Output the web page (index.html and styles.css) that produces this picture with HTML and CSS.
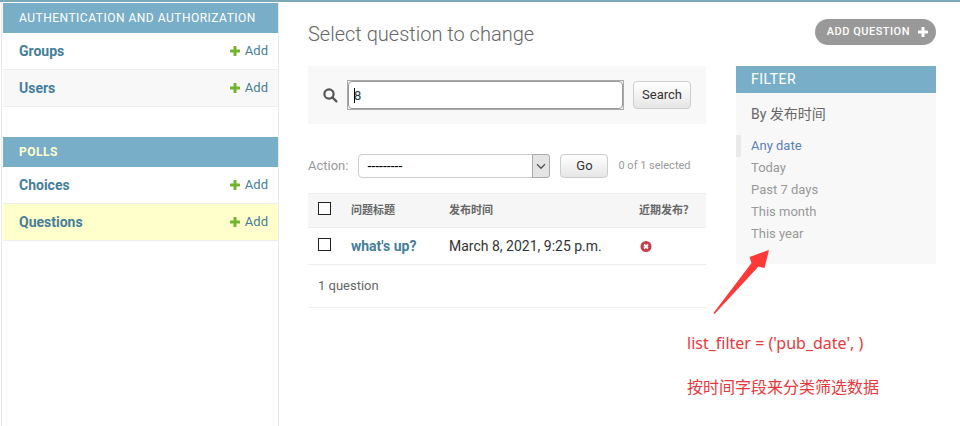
FILE: index.html
```html
<!DOCTYPE html>
<html lang="en">
<head>
<meta charset="utf-8">
<title>Select question to change</title>
<link rel="stylesheet" href="styles.css">
</head>
<body>
<svg class="defs" aria-hidden="true">
  <symbol id="plus" viewBox="0 0 10 10"><path d="M3.5 .6Q3.5 0 4.1 0h1.8q.6 0 .6.6v2.9h2.9q.6 0 .6.6v1.8q0 .6-.6.6H6.5v2.9q0 .6-.6.6H4.1q-.6 0-.6-.6V6.500H.6Q0 6.500 0 5.900V4.100q0-.6.6-.6h2.900z"/></symbol>
</svg>
<div class="page">
  <nav class="sidebar">
    <section class="app">
      <h2 class="caption"><a href="#auth">Authentication and Authorization</a></h2>
      <div class="model"><a class="name" href="#groups">Groups</a><a class="add" href="#add-group"><svg class="plus"><use href="#plus"/></svg>Add</a></div>
      <div class="model alt"><a class="name" href="#users">Users</a><a class="add" href="#add-user"><svg class="plus"><use href="#plus"/></svg>Add</a></div>
    </section>
    <section class="app">
      <h2 class="caption current"><a href="#polls">Polls</a></h2>
      <div class="model"><a class="name" href="#choices">Choices</a><a class="add" href="#add-choice"><svg class="plus"><use href="#plus"/></svg>Add</a></div>
      <div class="model selected"><a class="name" href="#questions">Questions</a><a class="add" href="#add-question"><svg class="plus"><use href="#plus"/></svg>Add</a></div>
    </section>
  </nav>
  <main class="content">
    <header class="title-row">
      <h1>Select question to change</h1>
      <a class="add-question" href="#add-question">Add question<svg class="plus"><use href="#plus"/></svg></a>
    </header>
    <div class="columns">
      <div class="changelist">
        <form class="search">
          <label for="query"><svg class="lens" viewBox="0 0 15 15" role="img" aria-label="Search"><circle cx="6" cy="6" r="4.600"/><path d="M9.400 9.400l4 4"/></svg></label>
          <span class="query-box"><input id="query" type="text" value="8"><i class="caret"></i></span>
          <button class="btn" type="button">Search</button>
        </form>
        <form class="actions">
          <label for="action">Action:</label>
          <span class="select-box">
            <select id="action"><option>---------</option></select>
            <svg class="arrow" viewBox="0 0 18 24" aria-hidden="true"><path d="M4.500 10l4.500 4.500 4.500-4.500"/></svg>
          </span>
          <button class="btn go" type="button">Go</button>
          <span class="counter">0 of 1 selected</span>
        </form>
        <table class="results">
          <thead>
            <tr><th class="check"><input type="checkbox" aria-label="Select all"></th><th class="question">问题标题</th><th class="date">发布时间</th><th>近期发布？</th></tr>
          </thead>
          <tbody>
            <tr><td class="check"><input type="checkbox" aria-label="Select what's up?"></td><td><a href="#question-1">what's up?</a></td><td>March 8, 2021, 9:25 p.m.</td><td><svg class="no" viewBox="0 0 13 13" role="img" aria-label="No"><circle cx="7" cy="6.500" r="5.500"/><path d="M5 4.500l4 4M9 4.500l-4 4"/></svg></td></tr>
          </tbody>
        </table>
        <p class="paginator">1 question</p>
      </div>
      <aside class="side">
        <div class="filter">
          <h2>Filter</h2>
          <h3>By 发布时间</h3>
          <ul>
            <li class="on"><a href="#any">Any date</a></li>
            <li><a href="#today">Today</a></li>
            <li><a href="#week">Past 7 days</a></li>
            <li><a href="#month">This month</a></li>
            <li><a href="#year">This year</a></li>
          </ul>
        </div>
        <div class="note">
          <svg class="pointer" viewBox="0 0 58 66" aria-hidden="true"><path d="M.5 63L38.500 13 36.500 7 56 0 51.500 18 45.500 16.500 2 63.500 1 64z"/></svg>
          <p>list_filter = ('pub_date', )</p>
          <p>按时间字段来分类筛选数据</p>
        </div>
      </aside>
    </div>
  </main>
</div>
</body>
</html>
```

FILE: styles.css
```css
* { box-sizing: border-box; }

body {
  margin: 0;
  background: #fff;
  color: #333;
  font: 13px/18px Roboto, "Noto Sans CJK SC", sans-serif;
}

h1, h2, h3, p, ul { margin: 0; padding: 0; }
a { color: #447e9b; text-decoration: none; }
.defs { position: absolute; width: 0; height: 0; }

.page {
  display: flex;
  min-height: 100vh;
  border-top: 2px solid #7aaab8;
}

/* Sidebar */
.sidebar {
  flex: none;
  width: 278px;
  margin-left: 1px;
  padding: 1px 0 0 1px;
  border: solid #eaeaea;
  border-width: 0 1px;
}
.app { margin-bottom: 30px; }
.caption {
  height: 30px;
  padding: 0 16px;
  background: #79aec8;
  font-size: 12px;
  font-weight: 400;
  line-height: 30px;
  letter-spacing: 0.5px;
  text-transform: uppercase;
}
.caption a { color: #fff; }
.caption.current { font-weight: 700; }
.caption.current a { color: #ffc; }
.model {
  display: flex;
  align-items: center;
  justify-content: space-between;
  height: 37px;
  padding: 0 10px 0 16px;
  border-bottom: 1px solid #eee;
}
.model.alt { background: #f8f8f8; }
.model.selected { background: #ffc; }
.name { font-size: 14px; font-weight: 700; }
.add { display: flex; align-items: center; gap: 5px; }
.plus { width: 10px; height: 10px; fill: #70b52c; }

/* Content */
.content { flex: 1; min-width: 0; padding: 16px 24px 0 29px; }
.title-row {
  display: flex;
  align-items: flex-start;
  justify-content: space-between;
  height: 48px;
}
h1 { color: #666; font-size: 20px; font-weight: 300; line-height: 32px; }
.add-question {
  display: flex;
  align-items: center;
  gap: 8px;
  height: 26px;
  margin-top: 1px;
  padding: 0 8px 0 12px;
  border-radius: 13px;
  background: #999;
  color: #fff;
  font-size: 11px;
  font-weight: 500;
  letter-spacing: 0.5px;
  text-transform: uppercase;
}
.add-question .plus { fill: #fff; }
.columns { display: flex; align-items: flex-start; gap: 30px; }
.changelist { flex: 1; min-width: 0; }

.btn {
  height: 28px;
  padding: 0 8px;
  border: 1px solid #ccc;
  border-radius: 4px;
  background: linear-gradient(#fff, #e6e6e6);
  color: #333;
  font: inherit;
}

.search {
  display: flex;
  align-items: center;
  gap: 9px;
  height: 58px;
  padding: 0 15px;
  background: #f8f8f8;
}
.search label { display: flex; }
.lens { width: 15px; height: 15px; fill: none; stroke: #555; stroke-width: 2.2; stroke-linecap: round; }
.query-box { position: relative; display: flex; flex: 1; border: 1px solid #aaa; }
.query-box input {
  width: 100%;
  height: 28px;
  padding: 0 5px;
  border: 1px solid #999;
  border-radius: 4px;
  background: #fff;
  color: #333;
  font: inherit;
}
.caret { position: absolute; left: 6px; top: 7px; width: 1px; height: 15px; background: #000; }

.actions {
  display: flex;
  align-items: center;
  gap: 10px;
  height: 24px;
  margin: 30px 0 15px;
  color: #999;
}
.select-box { position: relative; display: flex; flex: 1; max-width: 192px; }
.select-box select {
  width: 100%;
  height: 24px;
  padding: 0 24px 0 8px;
  appearance: none;
  border: 1px solid #ccc;
  border-radius: 4px;
  background: #fff;
  color: #000;
  font: inherit;
  font-size: 14px;
}
.arrow {
  position: absolute;
  right: 0;
  top: 0;
  width: 18px;
  height: 24px;
  border: 1px solid #aaa;
  border-radius: 0 3px 3px 0;
  background: #e4e4e4;
  fill: none;
  stroke: #555;
  stroke-width: 1.5;
  pointer-events: none;
}
.go { width: 48px; height: 24px; line-height: 22px; }
.counter { font-size: 11px; white-space: nowrap; }

.results { width: 100%; border-collapse: collapse; }
th, td { padding: 0 8px; text-align: left; white-space: nowrap; border-bottom: 1px solid #eee; }
th {
  height: 34px;
  border-top: 1px solid #eee;
  background: #f6f6f6;
  color: #666;
  font-size: 11px;
  font-weight: 700;
}
td { height: 37px; font-size: 14px; }
td a { font-weight: 700; }
.check { width: 35px; padding: 0 10px; }
.question { width: 98px; }
.date { width: 190px; }
.check input {
  display: block;
  width: 13px;
  height: 13px;
  margin: 0 0 4px;
  appearance: none;
  border: 1px solid #222;
  background: #fff;
}
.no { display: block; width: 13px; height: 13px; fill: #c93c4a; stroke: #fff; stroke-width: 1.8; }
.no circle { stroke: none; }
.paginator {
  height: 43px;
  padding: 0 10px;
  border-bottom: 1px solid #eee;
  color: #666;
  line-height: 42px;
}

/* Filter */
.side { position: relative; flex: none; width: 200px; }
.filter { padding-bottom: 19px; background: #f8f8f8; }
.filter h2 {
  padding: 0 15px;
  background: #79aec8;
  color: #fff;
  font-size: 14px;
  font-weight: 400;
  line-height: 27px;
  letter-spacing: 0.5px;
  text-transform: uppercase;
}
.filter h3 { padding: 0 15px; color: #666; font-size: 14px; font-weight: 400; line-height: 42px; }
.filter ul { list-style: none; }
.filter li { padding: 0 10px; border-left: 5px solid transparent; line-height: 22px; }
.filter li.on { border-color: #eaeaea; }
.filter li a { color: #999; }
.filter li.on a { color: #5b80b2; }

/* Annotation over the page */
.note {
  position: absolute;
  left: -49px;
  top: 184px;
  color: #e8383d;
  font: 16px/24px "Noto Sans", "Noto Sans CJK SC", sans-serif;
  white-space: nowrap;
}
.note p { margin-bottom: 20px; }
.pointer { display: block; width: 58px; height: 66px; margin: 0 0 15px 26px; fill: #ff3838; }
```
